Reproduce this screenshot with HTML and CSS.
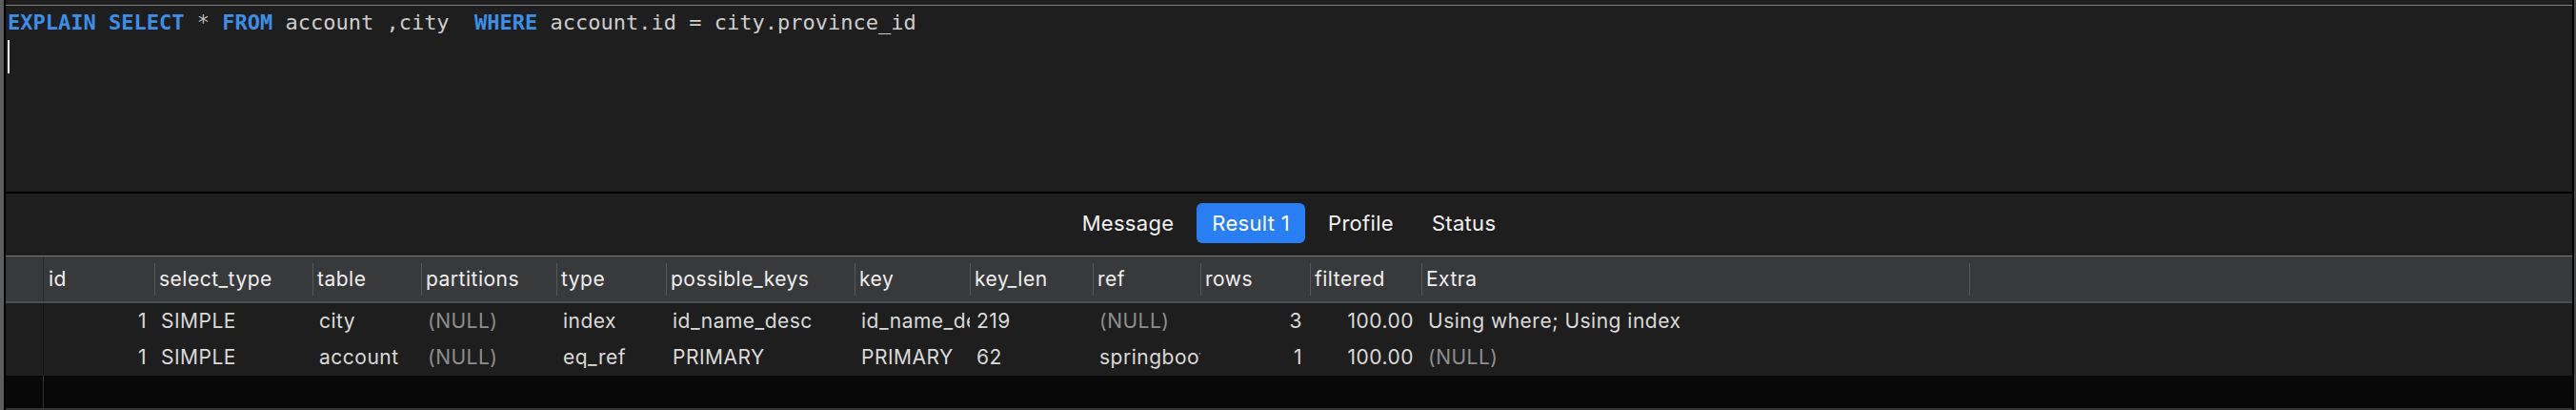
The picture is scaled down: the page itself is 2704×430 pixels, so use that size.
FILE: index.html
```html
<!DOCTYPE html>
<html>
<head>
<meta charset="utf-8">
<link rel="stylesheet" href="styles.css">
</head>
<body>
<div class="app">
  <div class="edge-left"></div>
  <div class="main">
    <div class="topbar"></div>
    <div class="editor">
      <div class="line"><span class="kw">EXPLAIN</span> <span class="kw">SELECT</span> <span class="op">*</span> <span class="kw">FROM</span> account ,city  <span class="kw">WHERE</span> account.id = city.province_id</div>
      <div class="line"><span class="cursor"></span></div>
    </div>
    <div class="divider"></div>
    <div class="results">
      <div class="tabs">
        <div class="tab">Message</div>
        <div class="tab active">Result 1</div>
        <div class="tab">Profile</div>
        <div class="tab">Status</div>
      </div>
      <div class="grid head">
        <div class="rn"></div>
        <div class="hc">id</div>
        <div class="hc">select_type</div>
        <div class="hc">table</div>
        <div class="hc">partitions</div>
        <div class="hc">type</div>
        <div class="hc">possible_keys</div>
        <div class="hc">key</div>
        <div class="hc">key_len</div>
        <div class="hc">ref</div>
        <div class="hc">rows</div>
        <div class="hc">filtered</div>
        <div class="hc">Extra</div>
        <div class="hc"></div>
      </div>
      <div class="grid row">
        <div class="rn"></div>
        <div class="c num">1</div>
        <div class="c">SIMPLE</div>
        <div class="c">city</div>
        <div class="c null">(NULL)</div>
        <div class="c">index</div>
        <div class="c">id_name_desc</div>
        <div class="c">id_name_desc</div>
        <div class="c">219</div>
        <div class="c null">(NULL)</div>
        <div class="c num">3</div>
        <div class="c num">100.00</div>
        <div class="c">Using where; Using index</div>
        <div class="c"></div>
      </div>
      <div class="grid row">
        <div class="rn"></div>
        <div class="c num">1</div>
        <div class="c">SIMPLE</div>
        <div class="c">account</div>
        <div class="c null">(NULL)</div>
        <div class="c">eq_ref</div>
        <div class="c">PRIMARY</div>
        <div class="c">PRIMARY</div>
        <div class="c">62</div>
        <div class="c">springboot.city.province_id</div>
        <div class="c num">1</div>
        <div class="c num">100.00</div>
        <div class="c null">(NULL)</div>
        <div class="c"></div>
      </div>
      <div class="empty"><div class="rn"></div></div>
    </div>
  </div>
  <div class="edge-right"></div>
</div>
</body>
</html>
```
FILE: styles.css
```css
html, body {
  margin: 0;
  padding: 0;
  background: #1e1e1e;
}
body {
  width: 2704px;
  height: 430px;
  overflow: hidden;
}
.app {
  display: flex;
  width: 2704px;
  height: 430px;
}
.edge-left {
  width: 4px;
  background: #5e5e60;
  border-right: 2px solid #000;
}
.edge-right {
  width: 2px;
  background: #4a4a4c;
  border-left: 2px solid #000;
}
.main {
  flex: 1;
  display: flex;
  flex-direction: column;
  min-width: 0;
}
.topbar {
  height: 5px;
  background: #1e1e1e;
  border-bottom: 1px solid #7d7d7d;
}
.editor {
  height: 195px;
  background: #1e1e1e;
  padding-left: 2px;
  font-family: "DejaVu Sans Mono", monospace;
  font-size: 22px;
  color: #cdcdcd;
}
.line {
  height: 36px;
  line-height: 36px;
  white-space: pre;
}
.kw {
  color: #3d8ee8;
  font-weight: bold;
}
.op {
  color: #bdbdbd;
}
.cursor {
  display: inline-block;
  width: 2px;
  height: 35px;
  background: #f2f2f2;
  vertical-align: top;
}
.divider {
  height: 2px;
  background: #000;
}
.results {
  flex: 1;
  display: flex;
  flex-direction: column;
  font-family: Inter, "Liberation Sans", sans-serif;
}
.tabs {
  height: 66px;
  box-sizing: border-box;
  padding-top: 10px;
  display: flex;
  justify-content: center;
  align-items: flex-start;
  gap: 8px;
  border-bottom: 1px solid #7a7a7a;
  background: #1e1e1e;
}
.tab {
  height: 42px;
  line-height: 43px;
  padding: 0 16px;
  font-size: 22px;
  letter-spacing: 0.3px;
  color: #f2f2f2;
  border-radius: 6px;
}
.tab.active {
  background: #2a7ef4;
  color: #fff;
}
.grid {
  display: grid;
  grid-template-columns: 40px 116px 166px 114px 142px 115px 198px 121px 129px 113px 115px 117px 575px 1fr;
}
.head {
  height: 47px;
  background: #38393b;
  border-bottom: 2px solid #4d4d4f;
  align-items: center;
}
.rn {
  box-sizing: border-box;
  border-right: 1px solid #2a2a2b;
  align-self: stretch;
}
.hc {
  height: 34px;
  line-height: 34px;
  border-left: 1px solid #56575a;
  padding-left: 4px;
  font-size: 21px;
  letter-spacing: 0.5px;
  color: #f0f0f0;
  white-space: nowrap;
  overflow: hidden;
}
.head .hc:nth-child(2) {
  border-left-color: #38393b;
}
.row {
  height: 38px;
  background: #1e1e1e;
}
.row .rn {
  border-right-color: #121212;
}
.c {
  line-height: 38px;
  font-size: 21px;
  letter-spacing: 0.5px;
  color: #dadada;
  padding: 0 8px 0 7px;
  white-space: nowrap;
  overflow: hidden;
}
.c.num {
  text-align: right;
}
.c.null {
  color: #8e8e8e;
}
.empty {
  flex: 1;
  display: flex;
  background: #080808;
  border-bottom: 2px solid #353535;
}
.empty .rn {
  width: 40px;
  border-right-color: #2e2e2e;
}
```
